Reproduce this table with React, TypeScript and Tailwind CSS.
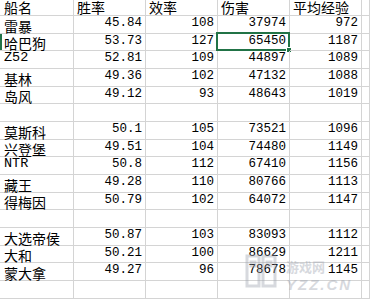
import React from "react";

type Row = [string, string, string, string, string] | null;

const header = ["船名", "胜率", "效率", "伤害", "平均经验"];

const rows: Row[] = [
  ["雷暴", "45.84", "108", "37974", "972"],
  ["哈巴狗", "53.73", "127", "65450", "1187"],
  ["Z52", "52.81", "109", "44897", "1089"],
  ["基林", "49.36", "102", "47132", "1088"],
  ["岛风", "49.12", "93", "48643", "1019"],
  null,
  ["莫斯科", "50.1", "105", "73521", "1096"],
  ["兴登堡", "49.51", "104", "74480", "1149"],
  ["NTR", "50.8", "112", "67410", "1156"],
  ["藏王", "49.28", "110", "80766", "1113"],
  ["得梅因", "50.79", "102", "64072", "1147"],
  null,
  ["大选帝侯", "50.87", "103", "83093", "1112"],
  ["大和", "50.21", "100", "86629", "1211"],
  ["蒙大拿", "49.27", "96", "78678", "1145"],
  null,
];

const cell = "relative flex items-end border-r border-b border-[#d4d4d4]";
const mono = "font-['Liberation_Mono','Noto_Sans_CJK_SC',monospace] text-[12.5px] leading-none";
const cjk = "font-['Noto_Sans_CJK_SC','Liberation_Sans',sans-serif] text-[14px] leading-[14px] whitespace-nowrap";

function TextCell({ value, head }: { value: string; head?: boolean }) {
  const ascii = /^[\x00-\x7f]*$/.test(value);
  if (ascii)
    return (
      <span className="font-['Liberation_Mono',monospace] text-[13.5px] leading-none pb-[3px]">
        {value}
      </span>
    );
  return <span className={`${cjk} ${head ? "pb-[1px]" : ""}`}>{value}</span>;
}

export default function App() {
  return (
    <div className="relative h-[299px] w-[370px] overflow-hidden bg-white text-black">
      <div className="grid grid-cols-[74px_72px_72px_72px_72px_1fr] grid-rows-[16px] auto-rows-[17.67px]">
        {header.map((h, i) => (
          <div key={h} className={`${cell} ${i === 0 ? "pl-[4px]" : "pl-[3px]"}`}>
            <TextCell value={h} head />
          </div>
        ))}
        <div className={cell} />

        {rows.map((row, r) => {
          const selectedRow = r === 1;
          if (!row) {
            return [0, 1, 2, 3, 4, 5].map((c) => (
              <div key={`e${r}-${c}`} className={cell} />
            ));
          }
          return [
            <div key={`a${r}`} className={`${cell} pl-[4px]`}>
              {selectedRow && (
                <span className="absolute top-0 bottom-0 left-0 w-[2px] bg-[#217346]" />
              )}
              <TextCell value={row[0]} />
            </div>,
            ...row.slice(1).map((v, c) => (
              <div key={`n${r}-${c}`} className={`${cell} justify-end pr-[3px]`}>
                <span className={`${mono} pb-[3px]`}>{v}</span>
                {selectedRow && c === 2 && (
                  <span className="absolute -top-[2px] -left-[2px] -right-px -bottom-px border-2 border-[#217346]">
                    <span className="absolute -right-[4px] -bottom-[4px] h-[6px] w-[6px] border border-white bg-[#217346]" />
                  </span>
                )}
              </div>
            )),
            <div key={`z${r}`} className={cell} />,
          ];
        })}
      </div>

      {/* watermark */}
      <div className="pointer-events-none absolute left-[244px] top-[250px] flex items-start gap-2 opacity-40">
        <svg width="34" height="40" viewBox="0 0 34 40" className="mt-[2px]">
          <path
            d="M3 4h12v30H3zM19 4h12v30H19zM7 10h4v4H7zM23 10h4v4h-4z"
            fill="none"
            stroke="#9ca3af"
            strokeWidth="3"
          />
        </svg>
        <div className="flex flex-col leading-none">
          <span className="mt-[10px] font-['Noto_Sans_CJK_SC',sans-serif] text-[13px] font-bold text-[#9ca3af]">
            游戏网
          </span>
          <span className="mt-[4px] font-['Liberation_Sans',sans-serif] text-[15px] font-bold italic tracking-[2px] text-[#9ca3af]">
            YZZ.CN
          </span>
        </div>
      </div>
    </div>
  );
}
